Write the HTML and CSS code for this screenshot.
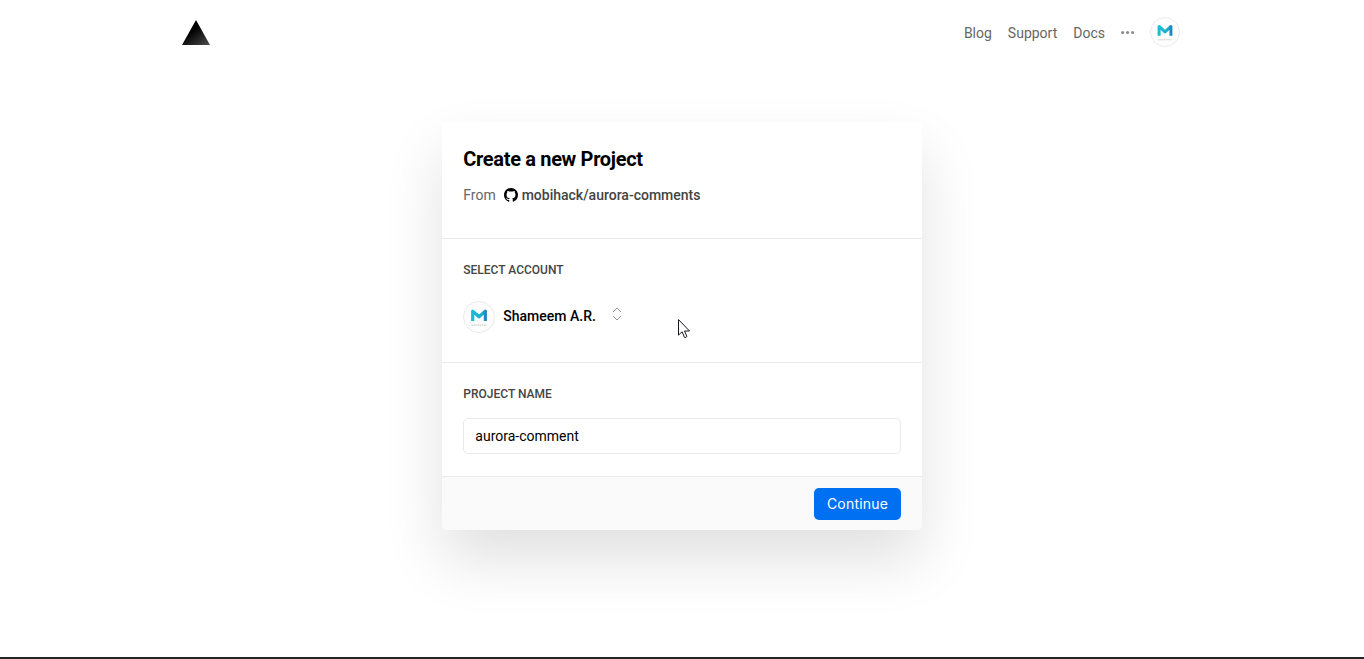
FILE: index.html
```html
<!DOCTYPE html>
<html lang="en">
<head>
<meta charset="utf-8">
<title>Create a new Project</title>
<link rel="stylesheet" href="styles.css">
</head>
<body>
<svg width="0" height="0" class="defs" aria-hidden="true">
  <defs>
    <linearGradient id="teal" x1="0" y1="0" x2="1" y2="0"><stop offset="0" stop-color="#19bdd4"/><stop offset=".8" stop-color="#20a9cc"/><stop offset="1" stop-color="#2484bc"/></linearGradient>
    <symbol id="avatar" viewBox="0 0 32 32">
      <circle cx="16" cy="16" r="15.5" fill="#fdfdfd" stroke="#eaeaea"/>
      <path d="M9.7 20V10.1L16 15.8L22.3 10.1V20" fill="none" stroke="url(#teal)" stroke-width="3.2" stroke-linejoin="round" stroke-linecap="butt"/>
      <path d="M8.5 24.2H23.5" stroke="#cfd1d1" stroke-width="1.2" stroke-dasharray="1.6 .4"/>
    </symbol>
  </defs>
</svg>
<header class="topbar">
  <svg class="logo" width="28" height="25" viewBox="0 0 28 25"><defs><linearGradient id="shade" x1=".4" y1=".4" x2="1" y2="1.1"><stop offset="0" stop-color="#000"/><stop offset="1" stop-color="#555"/></linearGradient></defs><path d="M14 0L28 25H0Z" fill="url(#shade)"/></svg>
  <nav class="nav">
    <a>Blog</a><a>Support</a><a>Docs</a>
    <svg class="dots" width="14" height="4" viewBox="0 0 14 4" fill="#888"><circle cx="1.6" cy="1.6" r="1.5"/><circle cx="6.6" cy="1.6" r="1.5"/><circle cx="11.6" cy="1.6" r="1.5"/></svg>
    <svg class="avatar-small"><use href="#avatar"/></svg>
  </nav>
</header>
<main class="card">
  <section class="intro">
    <h1>Create a new Project</h1>
    <p class="source"><span>From</span>
      <svg width="14" height="14" viewBox="0 0 16 16"><path d="M8 0C3.58 0 0 3.58 0 8c0 3.54 2.29 6.53 5.47 7.59.4.07.55-.17.55-.38 0-.19-.01-.82-.01-1.49-2.01.37-2.53-.49-2.69-.94-.09-.23-.48-.94-.82-1.13-.28-.15-.68-.52-.01-.53.63-.01 1.08.58 1.23.82.72 1.21 1.87.87 2.33.66.07-.52.28-.87.51-1.07-1.78-.2-3.64-.89-3.64-3.95 0-.87.31-1.59.82-2.15-.08-.2-.36-1.02.08-2.12 0 0 .67-.21 2.2.82.64-.18 1.32-.27 2-.27s1.36.09 2 .27c1.53-1.04 2.2-.82 2.2-.82.44 1.1.16 1.92.08 2.12.51.56.82 1.27.82 2.15 0 3.07-1.87 3.75-3.65 3.95.29.25.54.73.54 1.48 0 1.07-.01 1.93-.01 2.2 0 .21.15.46.55.38A8 8 0 0 0 16 8c0-4.42-3.58-8-8-8z"/></svg>
      <strong>mobihack/aurora-comments</strong></p>
  </section>
  <section class="account">
    <h2>Select Account</h2>
    <div class="picker">
      <svg class="avatar"><use href="#avatar"/></svg>
      <span class="name">Shameem A.R.</span>
      <svg class="chevrons" width="10" height="14" viewBox="0 0 10 14" fill="none" stroke="#999"><path d="M1 5L5 1L9 5M1 9L5 13L9 9"/></svg>
    </div>
  </section>
  <section class="project">
    <h2>Project Name</h2>
    <input class="field" type="text" value="aurora-comment">
  </section>
  <footer class="actions"><button class="continue">Continue</button></footer>
</main>
<div class="edge"></div>
<svg class="pointer" width="13" height="20" viewBox="0 0 13 20"><path d="M.5 .6V16.1L4.1 12.8L6.5 18.4Q8 19 8.9 17.5L6.5 12H11.5Z" fill="#fff" stroke="#15151f" stroke-width="1"/></svg>
</body>
</html>
```
FILE: styles.css
```css
* { box-sizing: border-box; }
body {
  margin: 0;
  height: 659px;
  display: flex;
  flex-direction: column;
  overflow: hidden;
  background: #fff;
  color: #000;
  font: 14px/20px Roboto, sans-serif;
}
h1, h2, p { margin: 0; }
svg { display: block; flex: none; }
.defs { position: absolute; }
.topbar {
  width: 1000px;
  height: 64px;
  margin: 0 auto;
  padding-right: 2px;
  display: flex;
  align-items: center;
  justify-content: space-between;
}
.nav { display: flex; align-items: center; gap: 16px; color: #666; padding-top: 1px; }
.dots { margin-right: -1px; }
.avatar-small { width: 30px; height: 30px; margin-top: -2px; }
.card {
  width: 480px;
  margin: 58px auto 0;
  border-radius: 5px;
  overflow: hidden;
  background: #fff;
  box-shadow: 0 30px 60px rgba(0, 0, 0, .12);
}
.intro { height: 117px; padding: 25px 21px 0 21.3px; border-bottom: 1px solid #eaeaea; }
h1 { font-size: 20px; line-height: 24px; font-weight: 700; letter-spacing: -.33px; }
.source { display: flex; align-items: center; margin-top: 14px; color: #666; }
.source svg { margin: 0 3.5px 0 8.4px; }
.source strong { font-weight: 500; color: #444; }
.account { height: 124px; padding: 21px 21px 0; border-bottom: 1px solid #eaeaea; }
h2 { padding-left: .3px; font-size: 12px; line-height: 20px; font-weight: 500; text-transform: uppercase; color: #444; }
.picker { display: flex; align-items: center; margin-top: 21px; font-weight: 500; }
.avatar { width: 32px; height: 32px; margin-right: 8.3px; }
.name { margin-top: -2px; }
.chevrons { margin: -6px 0 0 16.5px; }
.project { height: 113px; padding: 21px 21px 0; }
.field {
  display: block;
  width: 100%;
  height: 36px;
  margin-top: 14px;
  padding: 0 11.3px;
  border: 1px solid #eaeaea;
  border-radius: 5px;
  color: #000;
  font: inherit;
}
.actions {
  display: flex;
  justify-content: flex-end;
  padding: 11px 21px 10px;
  border-top: 1px solid #eaeaea;
  background: #fafafa;
}
.continue {
  width: 87px;
  height: 32px;
  padding: 0;
  border: 0;
  border-radius: 5px;
  background: #0070f3;
  color: #fff;
  font: 14px/20px Inter, sans-serif;
  letter-spacing: .2px;
}
.edge { height: 2px; margin-top: auto; background: #252526; }
.pointer { position: absolute; left: 678px; top: 319px; }
```
